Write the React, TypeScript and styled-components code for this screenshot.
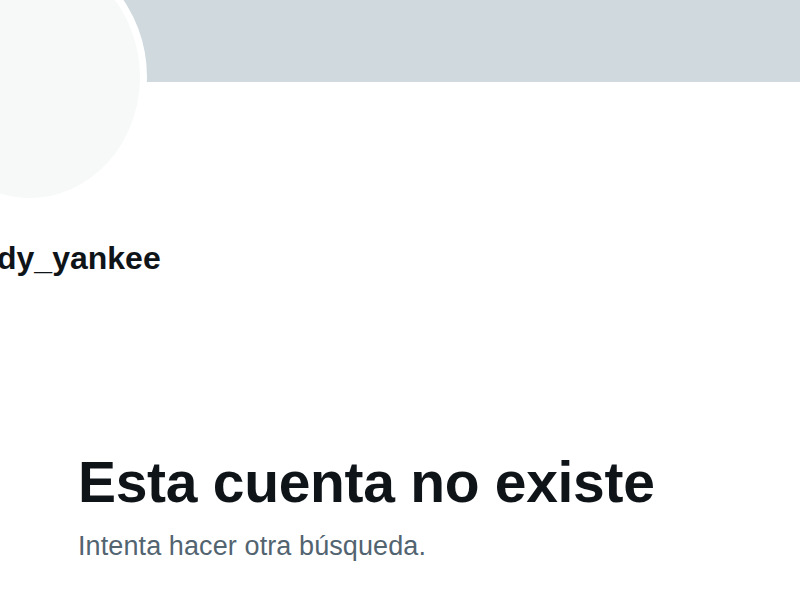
import React from 'react'
import styled, { createGlobalStyle } from 'styled-components'

const GlobalStyle = createGlobalStyle`
    html, body {
        margin: 0;
        padding: 0;
        background: #ffffff;
        overflow: hidden;
    }
    body {
        font-family: 'Liberation Sans', Arial, sans-serif;
        color: #0f1419;
    }
`

const App: React.FC = () => {
    return (
        <>
            <GlobalStyle />
            <Page>
                <Banner />
                <ProfileHead>
                    <Avatar />
                </ProfileHead>
                <UserName>dy_yankee</UserName>
                <EmptyState>
                    <EmptyTitle>Esta cuenta no existe</EmptyTitle>
                    <EmptyText>Intenta hacer otra búsqueda.</EmptyText>
                </EmptyState>
            </Page>
        </>
    )
}

export default App

const Page = styled.main`
    width: 800px;
    height: 600px;
    overflow: hidden;
    display: flex;
    flex-direction: column;
    background: #ffffff;
`

const Banner = styled.div`
    height: 82px;
    flex-shrink: 0;
    background: #cfd9de;
`

const ProfileHead = styled.div`
    display: flex;
    height: 116px;
`

// the shot is stretched a little vertically, so the avatar reads as an ellipse
const Avatar = styled.div`
    flex-shrink: 0;
    width: 220px;
    height: 242px;
    margin: -133px 0 0 -87px;
    border-radius: 50%;
    background: #f7f9f9;
    border: 7px solid #ffffff;
`

const UserName = styled.div`
    margin: 42px 0 0 -3px;
    font-size: 32px;
    font-weight: 700;
    line-height: 36px;
    color: #0f1419;
`

const EmptyState = styled.section`
    display: flex;
    flex-direction: column;
    padding: 174px 0 0 78px;
`

const EmptyTitle = styled.h1`
    margin: 0;
    font-size: 57px;
    font-weight: 700;
    line-height: 64px;
    letter-spacing: -0.3px;
    color: #0f1419;
`

const EmptyText = styled.p`
    margin: 16px 0 0;
    font-size: 27px;
    line-height: 32px;
    letter-spacing: 0.1px;
    color: #536471;
`
